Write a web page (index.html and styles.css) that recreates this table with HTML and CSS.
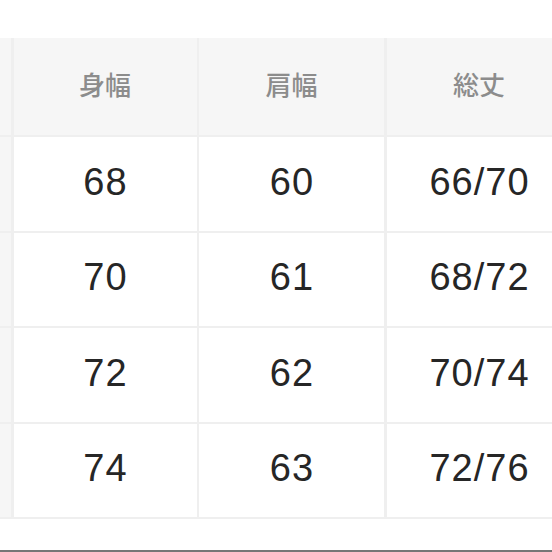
FILE: index.html
```html
<!DOCTYPE html>
<html lang="ja">
<head>
<meta charset="utf-8">
<link rel="stylesheet" href="styles.css">
</head>
<body>
<div class="page">
  <div class="table">
    <div class="cell head side"></div>
    <div class="cell head">身幅</div>
    <div class="cell head">肩幅</div>
    <div class="cell head">総丈</div>

    <div class="cell side"></div>
    <div class="cell data">68</div>
    <div class="cell data">60</div>
    <div class="cell data">66/70</div>

    <div class="cell side"></div>
    <div class="cell data">70</div>
    <div class="cell data">61</div>
    <div class="cell data">68/72</div>

    <div class="cell side"></div>
    <div class="cell data">72</div>
    <div class="cell data">62</div>
    <div class="cell data">70/74</div>

    <div class="cell side"></div>
    <div class="cell data">74</div>
    <div class="cell data">63</div>
    <div class="cell data">72/76</div>
  </div>
  <div class="bottom-bar"></div>
</div>
</body>
</html>
```

FILE: styles.css
```css
html, body {
  margin: 0;
  padding: 0;
  background: #ffffff;
  overflow: hidden;
}

.page {
  width: 552px;
  height: 552px;
  overflow: hidden;
  position: relative;
}

.table {
  margin-top: 38px;
  width: 574px;
  display: grid;
  grid-template-columns: 11px 183px 185px 185px;
  grid-template-rows: 97px repeat(4, 93.5px);
  column-gap: 2.5px;
  row-gap: 2px;
  background: #efefef;
  padding-bottom: 2px;
}

.cell {
  display: flex;
  align-items: center;
  justify-content: center;
  box-sizing: border-box;
}

.head {
  background: #f6f6f6;
  color: #8c8c8c;
  font-family: "Noto Sans CJK JP", "Noto Sans", sans-serif;
  font-weight: 500;
  font-size: 26px;
  padding-bottom: 6px;
}

.side {
  background: #f6f6f6;
}

.data {
  background: #ffffff;
  color: #262626;
  font-family: "Liberation Sans", Arial, sans-serif;
  font-size: 38px;
  letter-spacing: 1px;
  padding-left: 1px;
  padding-bottom: 3px;
}

.bottom-bar {
  position: absolute;
  left: 0;
  right: 0;
  bottom: 0;
  height: 2px;
  background: #767676;
}
```
